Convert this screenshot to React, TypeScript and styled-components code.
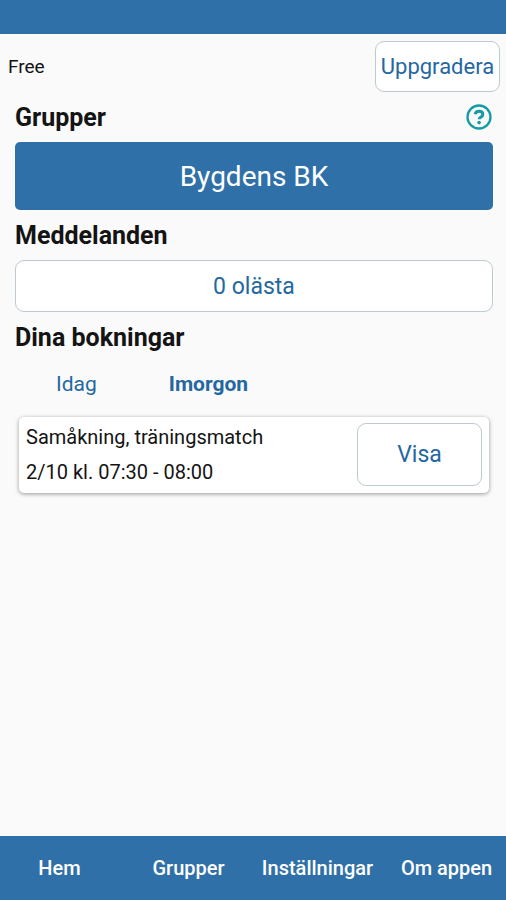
import React, { useState } from "react";
import styled, { createGlobalStyle } from "styled-components";

const blue = "#2f70a8";
const textBlue = "#24689f";
const line = "#bccbd0";

const GlobalStyle = createGlobalStyle`
  *, *::before, *::after { box-sizing: border-box; }
  body { margin: 0; background: #fafafa; color: #141414; font-family: Roboto, "Liberation Sans", sans-serif; }
  button { font-family: inherit; cursor: pointer; }
  h2, p { margin: 0; }
`;

const Page = styled.div`
  min-height: 100vh;
  display: flex;
  flex-direction: column;
`;

const StatusBar = styled.div`
  height: 34px;
  background: ${blue};
`;

const PlanBar = styled.header`
  display: flex;
  align-items: center;
  justify-content: space-between;
  padding: 7px 6px 0 8px;
  font-size: 19px;
`;

const OutlineButton = styled.button<{ $height: number; $width?: string; $compact?: boolean }>`
  width: ${(p) => p.$width ?? "100%"};
  height: ${(p) => p.$height}px;
  padding: 0;
  border: 1px solid ${line};
  border-radius: 9px;
  background: #fff;
  color: ${textBlue};
  font-size: ${(p) => (p.$compact ? 22 : 23)}px;
`;

const Main = styled.main`
  flex: 1;
  padding: 0 13px 0 15px;
`;

const SectionHead = styled.div`
  display: flex;
  align-items: center;
  justify-content: space-between;
  height: 50px;
  padding-right: 1px;
`;

const Title = styled.h2`
  padding-top: 2px;
  font-size: 25px;
  font-weight: 700;
  line-height: 32px;
`;

const HelpButton = styled.button`
  display: flex;
  padding: 0;
  border: 0;
  background: none;
  color: #169aa5;
`;

const GroupButton = styled.button`
  width: 100%;
  height: 68px;
  border: 0;
  border-radius: 5px;
  background: ${blue};
  color: #fff;
  font-size: 28px;
`;

const Tabs = styled.div`
  display: flex;
  padding-left: 41px;
  gap: 72px;
  height: 44px;
`;

const Tab = styled.button<{ $active: boolean }>`
  padding: 0;
  border: 0;
  background: none;
  color: ${textBlue};
  font-size: 21px;
  font-weight: ${(p) => (p.$active ? 700 : 400)};
`;

const Booking = styled.article`
  display: flex;
  align-items: center;
  justify-content: space-between;
  margin: 11px 4px 0;
  padding: 6px 7px 7px;
  border-radius: 5px;
  background: #fff;
  box-shadow: 0 1px 4px rgba(0, 0, 0, 0.4);
`;

const BookingText = styled.div`
  display: grid;
  gap: 11px;
  font-size: 20px;
  line-height: 24px;
`;

const BottomNav = styled.nav`
  display: flex;
  justify-content: center;
  overflow: hidden;
  height: 64px;
  background: ${blue};
`;

const NavLink = styled.a`
  flex: 0 0 25.5%;
  display: flex;
  align-items: center;
  justify-content: center;
  color: #fff;
  font-size: 20px;
  font-weight: 500;
  text-decoration: none;
  white-space: nowrap;
`;

function HelpIcon() {
  return (
    <svg width="26" height="26" viewBox="0 0 26 26" fill="none" stroke="currentColor" aria-hidden="true">
      <circle cx="13" cy="13" r="11.5" strokeWidth="2.3" />
      <path d="M9.2 10.3c.3-1.9 1.8-3 3.8-3 2.2 0 3.8 1.2 3.8 3.1 0 2.6-3.6 2.5-3.6 4.9" strokeWidth="3" />
      <circle cx="13.1" cy="18.6" r="1.8" fill="currentColor" stroke="none" />
    </svg>
  );
}

const days = ["Idag", "Imorgon"];
const links = ["Hem", "Grupper", "Inställningar", "Om appen"];

export default function App() {
  const [day, setDay] = useState("Imorgon");
  return (
    <Page>
      <GlobalStyle />
      <StatusBar />
      <PlanBar>
        <span>Free</span>
        <OutlineButton $height={51} $width="125px" $compact>Uppgradera</OutlineButton>
      </PlanBar>
      <Main>
        <SectionHead>
          <Title>Grupper</Title>
          <HelpButton aria-label="Hjälp"><HelpIcon /></HelpButton>
        </SectionHead>
        <GroupButton>Bygdens BK</GroupButton>
        <SectionHead><Title>Meddelanden</Title></SectionHead>
        <OutlineButton $height={52}>0 olästa</OutlineButton>
        <SectionHead><Title>Dina bokningar</Title></SectionHead>
        <Tabs role="tablist">
          {days.map((d) => (
            <Tab key={d} role="tab" aria-selected={d === day} $active={d === day} onClick={() => setDay(d)}>{d}</Tab>
          ))}
        </Tabs>
        <Booking>
          <BookingText>
            <p>Samåkning, träningsmatch</p>
            <p>2/10 kl. 07:30 - 08:00</p>
          </BookingText>
          <OutlineButton $height={63} $width="125px">Visa</OutlineButton>
        </Booking>
      </Main>
      <BottomNav>
        {links.map((l) => (
          <NavLink key={l} href="#">{l}</NavLink>
        ))}
      </BottomNav>
    </Page>
  );
}
